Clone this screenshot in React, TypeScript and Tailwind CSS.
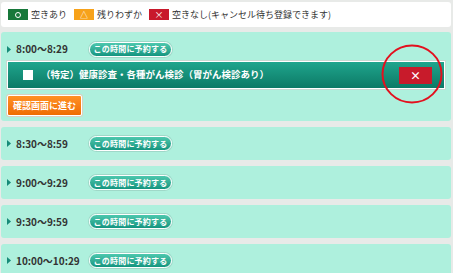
import React from "react";

const font = { fontFamily: '"Noto Sans CJK JP", "Noto Sans", sans-serif' };

function Arrow() {
  return (
    <svg width="4" height="7" viewBox="0 0 4 7" className="shrink-0">
      <polygon points="0,0 4,3.5 0,7" fill="#168a78" />
    </svg>
  );
}

function Pill() {
  return (
    <div className="shrink-0 h-[15px] w-[83px] rounded-full border border-white bg-gradient-to-b from-[#4cc8ae] to-[#12957f] shadow-[0_0_0_1px_#9fd8c8] flex items-center justify-center text-white font-bold text-[8px] leading-none tracking-[0.2px]">
      この時間に予約する
    </div>
  );
}

function TimeRow({ t }: { t: string }) {
  return (
    <div className="flex items-center h-[16px]">
      <div className="w-[9px] flex shrink-0"><Arrow /></div>
      <div className="w-[73px] shrink-0 text-[10px] font-bold text-[#333] leading-none whitespace-nowrap">{t}</div>
      <Pill />
    </div>
  );
}

export default function App() {
  return (
    <div className="w-[453px] h-[273px] overflow-hidden bg-[#e8eae8] relative" style={font}>
      <div className="ml-[1px] mr-[2px] mt-[2px] h-[25px] bg-white rounded-[3px] flex items-center pl-[7px] text-[9px] text-[#333]">
        <div className="w-[20px] h-[11px] bg-[#17783a] flex items-center justify-center">
          <div className="w-[6px] h-[6px] rounded-full border border-white"></div>
        </div>
        <span className="ml-[3px]">空きあり</span>
        <div className="ml-[7px] w-[20px] h-[11px] bg-[#f7a21a] flex items-center justify-center text-white text-[8px] leading-none">△</div>
        <span className="ml-[3px]">残りわずか</span>
        <div className="ml-[7px] w-[20px] h-[11px] bg-[#c8182b] flex items-center justify-center text-white text-[9px] leading-none">×</div>
        <span className="ml-[3px]">空きなし(キャンセル待ち登録できます)</span>
      </div>

      <div className="ml-[1px] mr-[2px] mt-[5px] flex flex-col gap-[6px]">
        <div className="h-[89px] bg-[#aef0dd] rounded-[3px] pl-[6px] pr-[6px] pt-[9px]">
          <TimeRow t="8:00〜8:29" />
          <div className="mt-[4px] h-[28px] border border-white shadow-[0_0_0_1px_#c7d9d2] bg-gradient-to-b from-[#1fa58d] to-[#0c7a66] flex items-center pl-[15px] pr-[12px]">
            <div className="w-[10px] h-[10px] bg-white"></div>
            <span className="ml-[8px] text-white font-bold text-[9.5px] leading-none">（特定）健康診査・各種がん検診（胃がん検診あり）</span>
            <div className="ml-auto w-[33px] h-[17px] bg-[#c81b2b] flex items-center justify-center text-white font-bold text-[11px] leading-none">×</div>
          </div>
          <div className="mt-[6px] w-[75px] h-[21px] border border-white rounded-[2px] shadow-[0_0_0_1px_#d9d0c0] bg-gradient-to-b from-[#ff9124] to-[#ef6c00] flex items-center justify-center text-white font-bold text-[9px] leading-none">
            確認画面に進む
          </div>
        </div>
        {["8:30〜8:59", "9:00〜9:29", "9:30〜9:59", "10:00〜10:29"].map((t) => (
          <div key={t} className="h-[33px] bg-[#aef0dd] rounded-[3px] pl-[6px] flex items-center">
            <TimeRow t={t} />
          </div>
        ))}
      </div>

      <svg className="absolute left-[381px] top-[44px]" width="62" height="60" viewBox="0 0 62 60">
        <ellipse cx="31" cy="30" rx="29.5" ry="28.5" fill="none" stroke="#e3101e" strokeWidth="2" />
      </svg>
    </div>
  );
}
